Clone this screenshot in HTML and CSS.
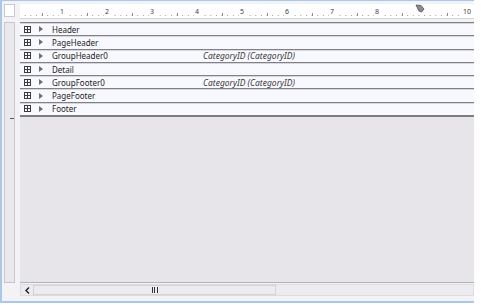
FILE: index.html
```html
<!DOCTYPE html>
<html lang="en">
<head>
  <meta charset="UTF-8" />
  <title>Report Designer</title>
  <link rel="stylesheet" href="styles.css">
</head>
<body>
<div class="window">
  <div class="corner"></div>
  <div class="ruler">
    <div class="nums">
      <span><b>1</b></span><span><b>2</b></span><span><b>3</b></span><span><b>4</b></span><span><b>5</b></span>
      <span><b>6</b></span><span><b>7</b></span><span><b>8</b></span><span class="marker">
        <svg width="10" height="9" viewBox="0 0 10 9"><path d="M1 1 L6 1.5 L9 5 L6.5 8 L4 7 Z" fill="#8a8a94" stroke="#4e4e58" stroke-width="0.8"/></svg>
      </span><span><b>10</b></span>
    </div>
  </div>

  <div class="vruler"><span class="vmark"></span></div>
  <div class="canvas">
    <div class="bands">
      <div class="band"><i class="box"></i><i class="arrow"></i><span class="name">Header</span></div>
      <div class="band"><i class="box"></i><i class="arrow"></i><span class="name">PageHeader</span></div>
      <div class="band"><i class="box"></i><i class="arrow"></i><span class="name">GroupHeader0</span><span class="expr">CategoryID (CategoryID)</span></div>
      <div class="band"><i class="box"></i><i class="arrow"></i><span class="name">Detail</span></div>
      <div class="band"><i class="box"></i><i class="arrow"></i><span class="name">GroupFooter0</span><span class="expr">CategoryID (CategoryID)</span></div>
      <div class="band"><i class="box"></i><i class="arrow"></i><span class="name">PageFooter</span></div>
      <div class="band last"><i class="box"></i><i class="arrow"></i><span class="name">Footer</span></div>
    </div>
  </div>

  <div class="hscroll">
    <span class="left">
      <svg width="5" height="7" viewBox="0 0 5 7"><path d="M4 0.5 L1 3.5 L4 6.5" fill="none" stroke="#222" stroke-width="1.4"/></svg>
    </span>
    <div class="thumb"><span class="grip"></span></div>
  </div>
</div>
</body>
</html>
```

FILE: styles.css
```css
html, body {
  margin: 0;
  background: #fff;
}
body {
  font-family: "Noto Sans", "Open Sans", sans-serif;
  color: #2a2a2a;
}
.window {
  width: 472px;
  height: 297px;
  background: #f3f3f5;
  border-top: 1px solid #a9c8ea;
  border-left: 2px solid #a9c8ea;
  border-bottom: 2px solid #a9c8ea;
  display: grid;
  grid-template-columns: 18px 454px;
  grid-template-rows: 17px 261px 16px;
  padding-top: 3px;
}
.corner {
  margin-left: 2px;
  width: 11px;
  height: 13px;
  background: #fff;
  border: 1px solid #c9c9cf;
  box-sizing: border-box;
}
.ruler {
  height: 14px;
  background-color: #fff;
  border-bottom: 1px solid #d4d4da;
  background-image:
    repeating-linear-gradient(to right, transparent 0 22px, #8e8e96 22px 23px, transparent 23px 45px),
    linear-gradient(to right, transparent 5px, #9c9ca4 5px);
  background-size: 100% 3px, 5.625px 1px;
  background-position: 0 9px, 0 11px;
  background-repeat: repeat-x;
}
.nums {
  display: flex;
  font-size: 7px;
  line-height: 8px;
  color: #3e3e44;
  padding-top: 4px;
}
.nums span {
  width: 45px;
  flex: none;
  text-align: right;
  margin-right: -2px;
  margin-left: 2px;
}
.nums span:first-child {
  margin-left: 0;
}
.nums b {
  font-weight: normal;
  background: #fff;
  padding: 0 1px;
}
.nums .marker {
  display: flex;
  justify-content: flex-end;
  margin-top: -4px;
  margin-right: 0;
}
.vruler {
  margin: 1px 0 0 2px;
  width: 11px;
  height: 261px;
  background: #e9e9ed;
  border: 1px solid #c6c6cc;
  box-sizing: border-box;
  position: relative;
}
.vmark {
  position: absolute;
  left: 5px;
  top: 95px;
  width: 4px;
  height: 1px;
  background: #55555d;
}
.canvas {
  margin-top: 1px;
  background: #e7e5e9;
  border-bottom: 1px solid #b2b2b6;
  height: 260px;
}
.bands {
  border-bottom: 2px solid #7d7d80;
}
.band {
  height: 13.3px;
  box-sizing: border-box;
  border-top: 1px solid #828286;
  box-shadow: inset 0 1px #d6d6dc;
  background: #f8f9fe;
  display: flex;
  align-items: center;
  font-size: 8px;
  position: relative;
}
.box {
  width: 7px;
  height: 7px;
  margin-left: 4px;
  box-sizing: border-box;
  border: 1px solid #3c3c3c;
  background:
    linear-gradient(#3c3c3c, #3c3c3c) center / 5px 1px no-repeat,
    linear-gradient(#3c3c3c, #3c3c3c) center / 1px 5px no-repeat;
  flex: none;
}
.arrow {
  width: 0;
  height: 0;
  margin-left: 8px;
  border-top: 3px solid transparent;
  border-bottom: 3px solid transparent;
  border-left: 4px solid #6e6e74;
  flex: none;
}
.name {
  margin-left: 9px;
  color: #1c1c1c;
}
.expr {
  position: absolute;
  left: 183px;
  font-style: italic;
  font-size: 8.5px;
  color: #3a3a3a;
}
.hscroll {
  grid-column: 2;
  margin-top: 2px;
  height: 12px;
  background: #ececf0;
  border: 1px solid #dcdce0;
  box-sizing: border-box;
  display: flex;
  align-items: center;
}
.left {
  width: 11px;
  display: flex;
  justify-content: center;
  margin-left: 1px;
}
.thumb {
  width: 243px;
  height: 10px;
  box-sizing: border-box;
  border: 1px solid #d2d2d8;
  background: #ebebf0;
  display: flex;
  align-items: center;
  justify-content: center;
}
.grip {
  width: 6px;
  height: 6px;
  background: repeating-linear-gradient(to right, #333 0 1px, transparent 1px 2.5px);
}
```
